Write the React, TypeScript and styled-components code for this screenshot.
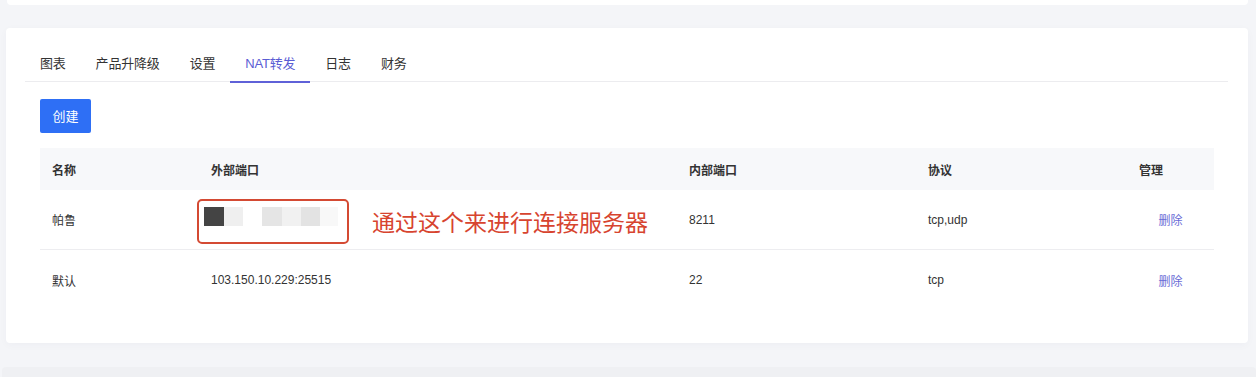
import React from "react";
import styled, { createGlobalStyle } from "styled-components";

const GlobalStyle = createGlobalStyle`
	body {
		margin: 0;
		background: #f4f5f8;
		font-family: "Liberation Sans", "Noto Sans CJK SC", sans-serif;
		color: #333;
	}
`;

const PageSC = styled.div`
	height: 377px;
	overflow: hidden;
	display: flex;
	flex-direction: column;
`;

const TopCardSC = styled.div`
	height: 5px;
	margin: 0 8px 0 7px;
	background: #fff;
	border-radius: 0 0 4px 4px;
`;

const CardSC = styled.section`
	height: 315px;
	margin: 23px 8px 0 6px;
	padding: 16px 20px 0;
	box-sizing: border-box;
	background: #fff;
	border-radius: 4px;
	box-shadow: 0 2px 8px rgba(30, 40, 80, 0.03);
`;

const BottomCardSC = styled.div`
	flex: 1;
	margin: 24px 0 0 2px;
	background: #eff0f3;
	border-radius: 4px 4px 0 0;
`;

const TabsSC = styled.nav`
	display: flex;
	height: 37px;
	margin-left: -1px;
	border-bottom: 1px solid #ececef;
`;

const TabSC = styled.div<{ $active?: boolean }>`
	position: relative;
	display: flex;
	align-items: center;
	padding: 0 15px;
	font-size: 13px;
	letter-spacing: -0.2px;
	color: ${(p) => (p.$active ? "#5b5dd4" : "#333")};
	&::after {
		content: "";
		position: absolute;
		left: 0;
		right: 0;
		bottom: -2px;
		height: 2px;
		background: ${(p) => (p.$active ? "#5f61d8" : "transparent")};
	}
`;

const ContentSC = styled.div`
	padding: 17px 14px 0;
`;

const ButtonSC = styled.button`
	width: 51px;
	height: 34px;
	border: none;
	border-radius: 2px;
	background: #2e6ff5;
	color: #fff;
	font-family: inherit;
	font-size: 13px;
	padding: 0 0 2px;
`;

const TableSC = styled.div`
	margin-top: 15px;
	display: grid;
	grid-template-columns: 159px 478px 239px 211px 87px;
`;

const HeadCellSC = styled.div`
	height: 42px;
	display: flex;
	align-items: center;
	padding-left: 12px;
	background: #f7f8fa;
	font-size: 12px;
	font-weight: 600;
	color: #333;
`;

const CellSC = styled.div<{ $last?: boolean; $center?: boolean }>`
	height: 60px;
	display: flex;
	align-items: center;
	justify-content: ${(p) => (p.$center ? "center" : "flex-start")};
	padding-left: ${(p) => (p.$center ? "0" : "12px")};
	box-sizing: border-box;
	border-bottom: ${(p) => (p.$last ? "none" : "1px solid #ededf0")};
	font-size: 12px;
	color: #333;
`;

const LinkSC = styled.a`
	color: #6a6cd6;
	font-size: 12px;
	cursor: pointer;
`;

const MarkBoxSC = styled.div`
	margin: 3px 0 0 -14px;
	width: 152px;
	height: 45px;
	box-sizing: border-box;
	border: 2px solid #d44a33;
	border-radius: 5px;
	padding: 6px 0 0 5px;
	display: flex;
	align-items: flex-start;
`;

const BlurSC = styled.span<{ $bg: string; $w: number }>`
	display: block;
	height: 19px;
	width: ${(p) => p.$w}px;
	background: ${(p) => p.$bg};
`;

const NoteSC = styled.span`
	margin-left: 23px;
	margin-top: 3px;
	font-size: 23px;
	color: #d7442f;
	white-space: nowrap;
`;

const tabs = ["图表", "产品升降级", "设置", "NAT转发", "日志", "财务"];

const blurBlocks = [
	{ bg: "#444", w: 20 },
	{ bg: "#efefef", w: 19 },
	{ bg: "#fff", w: 19 },
	{ bg: "#e5e5e5", w: 20 },
	{ bg: "#f1f1f1", w: 19 },
	{ bg: "#e3e3e3", w: 19 },
	{ bg: "#f8f8f8", w: 18 },
];

const rows = [
	{ name: "帕鲁", outer: null, inner: "8211", proto: "tcp,udp" },
	{ name: "默认", outer: "103.150.10.229:25515", inner: "22", proto: "tcp" },
];

const App = () => {
	return (
		<PageSC>
			<GlobalStyle />
			<TopCardSC />
			<CardSC>
				<TabsSC>
					{tabs.map((t) => (
						<TabSC key={t} $active={t === "NAT转发"}>
							{t}
						</TabSC>
					))}
				</TabsSC>
				<ContentSC>
					<ButtonSC>创建</ButtonSC>
					<TableSC>
						<HeadCellSC>名称</HeadCellSC>
						<HeadCellSC>外部端口</HeadCellSC>
						<HeadCellSC>内部端口</HeadCellSC>
						<HeadCellSC>协议</HeadCellSC>
						<HeadCellSC>管理</HeadCellSC>
						{rows.map((r, i) => {
							const last = i === rows.length - 1;
							return (
								<React.Fragment key={r.name}>
									<CellSC $last={last}>{r.name}</CellSC>
									<CellSC $last={last}>
										{r.outer ?? (
											<>
												<MarkBoxSC>
													{blurBlocks.map((b, j) => (
														<BlurSC key={j} $bg={b.bg} $w={b.w} />
													))}
												</MarkBoxSC>
												<NoteSC>通过这个来进行连接服务器</NoteSC>
											</>
										)}
									</CellSC>
									<CellSC $last={last}>{r.inner}</CellSC>
									<CellSC $last={last}>{r.proto}</CellSC>
									<CellSC $last={last} $center>
										<LinkSC>删除</LinkSC>
									</CellSC>
								</React.Fragment>
							);
						})}
					</TableSC>
				</ContentSC>
			</CardSC>
			<BottomCardSC />
		</PageSC>
	);
};

export default App;
